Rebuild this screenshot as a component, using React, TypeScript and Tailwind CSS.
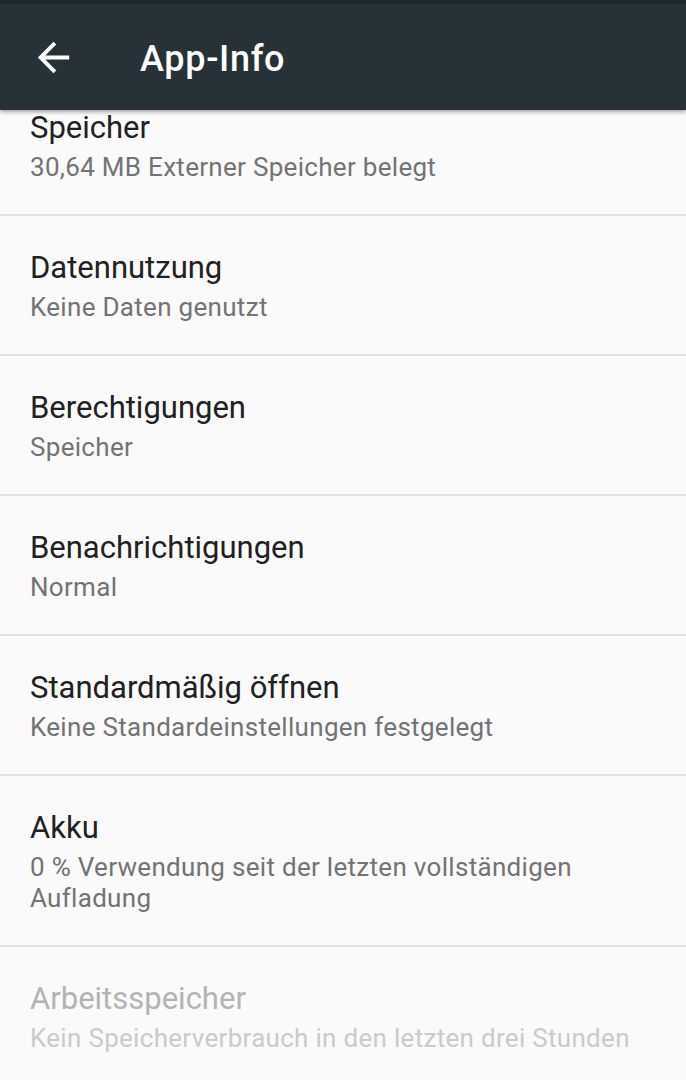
import React from 'react';

type Entry = {
  title: string;
  summary: string;
  disabled?: boolean;
};

const entries: Entry[] = [
  { title: 'Speicher', summary: '30,64 MB Externer Speicher belegt' },
  { title: 'Datennutzung', summary: 'Keine Daten genutzt' },
  { title: 'Berechtigungen', summary: 'Speicher' },
  { title: 'Benachrichtigungen', summary: 'Normal' },
  { title: 'Standardmäßig öffnen', summary: 'Keine Standardeinstellungen festgelegt' },
  { title: 'Akku', summary: '0 % Verwendung seit der letzten vollständigen Aufladung' },
  { title: 'Arbeitsspeicher', summary: 'Kein Speicherverbrauch in den letzten drei Stunden', disabled: true },
];

function BackArrow() {
  return (
    <svg width="47" height="47" viewBox="0 0 24 24" fill="#ffffff">
      <path d="M20 11H7.83l5.59-5.59L12 4l-8 8 8 8 1.41-1.41L7.83 13H20v-2z" />
    </svg>
  );
}

function SettingRow({ entry, first }: { entry: Entry; first?: boolean }) {
  return (
    <div className={`border-b-2 border-[#e0e0e0] pl-[30px] pr-[40px] pt-[32px] pb-[31px] ${first ? '-mt-[34px]' : ''}`}>
      <div className={`text-[31px] leading-[40px] ${entry.disabled ? 'text-[#b3b3b3]' : 'text-[#212121]'}`}>
        {entry.title}
      </div>
      <div
        className={`mt-[4px] text-[26px] leading-[31px] tracking-[0.3px] ${entry.disabled ? 'text-[#cacaca]' : 'text-[#737373]'}`}
      >
        {entry.summary}
      </div>
    </div>
  );
}

export default function App() {
  return (
    <div className="flex h-[1080px] w-[686px] flex-col overflow-hidden bg-[#fafafa] font-['Roboto',sans-serif]">
      <div className="relative z-10 shadow-[0_2px_4px_rgba(0,0,0,0.35)]">
        <div className="h-[4px] bg-[#1d272c]" />
        <div className="flex h-[106px] items-center bg-[#263238]">
          <div className="ml-[30px] flex">
            <BackArrow />
          </div>
          <div className="ml-[63px] mt-[4px] text-[36px] font-medium leading-[40px] tracking-[0.7px] text-white">
            App-Info
          </div>
        </div>
      </div>
      <div className="flex-1 overflow-hidden">
        {entries.map((entry, i) => (
          <SettingRow key={entry.title} entry={entry} first={i === 0} />
        ))}
      </div>
    </div>
  );
}
